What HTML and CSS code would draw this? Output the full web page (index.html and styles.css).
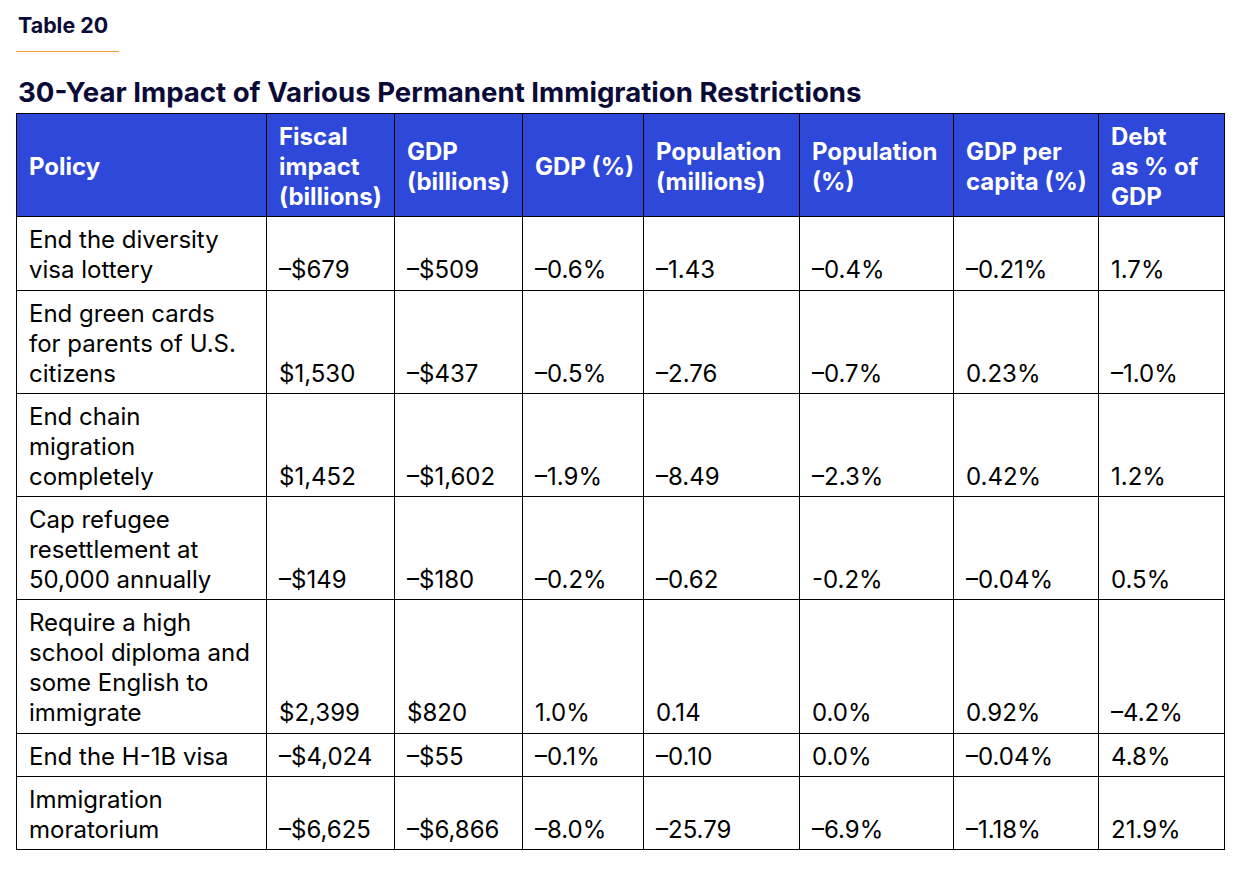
FILE: index.html
```html
<!DOCTYPE html>
<html>
<head>
<meta charset="utf-8">
<link rel="stylesheet" href="styles.css">
</head>
<body>
<div class="wrap">
  <div class="label">Table 20</div>
  <div class="rule"></div>
  <h1 class="title">30-Year Impact of Various Permanent Immigration Restrictions</h1>
  <table class="data">
    <colgroup>
      <col class="c1"><col class="c2"><col class="c3"><col class="c4"><col class="c5"><col class="c6"><col class="c7"><col class="c8">
    </colgroup>
    <thead>
      <tr>
        <th>Policy</th>
        <th>Fiscal<br>impact<br>(billions)</th>
        <th>GDP<br>(billions)</th>
        <th>GDP (%)</th>
        <th>Population<br>(millions)</th>
        <th>Population<br>(%)</th>
        <th>GDP per<br>capita (%)</th>
        <th>Debt<br>as % of<br>GDP</th>
      </tr>
    </thead>
    <tbody>
      <tr><td class="pol">End the diversity<br>visa lottery</td><td>–$679</td><td>–$509</td><td>–0.6%</td><td>–1.43</td><td>–0.4%</td><td>–0.21%</td><td>1.7%</td></tr>
      <tr><td class="pol">End green cards<br>for parents of U.S.<br>citizens</td><td>$1,530</td><td>–$437</td><td>–0.5%</td><td>–2.76</td><td>–0.7%</td><td>0.23%</td><td>–1.0%</td></tr>
      <tr><td class="pol">End chain<br>migration<br>completely</td><td>$1,452</td><td>–$1,602</td><td>–1.9%</td><td>–8.49</td><td>–2.3%</td><td>0.42%</td><td>1.2%</td></tr>
      <tr><td class="pol">Cap refugee<br>resettlement at<br>50,000 annually</td><td>–$149</td><td>–$180</td><td>–0.2%</td><td>–0.62</td><td>-0.2%</td><td>–0.04%</td><td>0.5%</td></tr>
      <tr><td class="pol">Require a high<br>school diploma and<br>some English to<br>immigrate</td><td>$2,399</td><td>$820</td><td>1.0%</td><td>0.14</td><td>0.0%</td><td>0.92%</td><td>–4.2%</td></tr>
      <tr><td class="pol">End the H-1B visa</td><td>–$4,024</td><td>–$55</td><td>–0.1%</td><td>–0.10</td><td>0.0%</td><td>–0.04%</td><td>4.8%</td></tr>
      <tr><td class="pol">Immigration<br>moratorium</td><td>–$6,625</td><td>–$6,866</td><td>–8.0%</td><td>–25.79</td><td>–6.9%</td><td>–1.18%</td><td>21.9%</td></tr>
    </tbody>
  </table>
</div>
</body>
</html>
```
FILE: styles.css
```css
html, body {
  margin: 0;
  padding: 0;
  background: #ffffff;
}
body {
  font-family: "Inter", "Liberation Sans", Arial, sans-serif;
}
.wrap {
  padding: 11px 16px 0 16px;
  width: 1208px;
}
.label {
  margin-left: 2px;
  font-size: 21.4px;
  font-weight: 700;
  color: #0b0b38;
  line-height: 28px;
}
.rule {
  width: 103px;
  height: 1px;
  background: #f0a030;
  margin-top: 12px;
}
.title {
  margin: 23px 0 0 2px;
  font-size: 27.6px;
  font-weight: 700;
  color: #0b0b38;
  line-height: 34px;
}
.data {
  margin-top: 4px;
  border-collapse: collapse;
  table-layout: fixed;
  width: 1208px;
}
.c1 { width: 250px; }
.c2 { width: 128px; }
.c3 { width: 128px; }
.c4 { width: 121px; }
.c5 { width: 156px; }
.c6 { width: 154px; }
.c7 { width: 145px; }
.c8 { width: 126px; }
.data th, .data td {
  border: 1.5px solid #000;
  padding: 8px 10px 4.25px 12px;
  text-align: left;
  font-size: 24px;
  line-height: 30px;
  white-space: nowrap;
}
.data th {
  background: #2e48da;
  color: #ffffff;
  font-weight: 700;
  vertical-align: middle;
}
.data td {
  color: #000000;
  font-weight: 400;
  vertical-align: bottom;
}
```
